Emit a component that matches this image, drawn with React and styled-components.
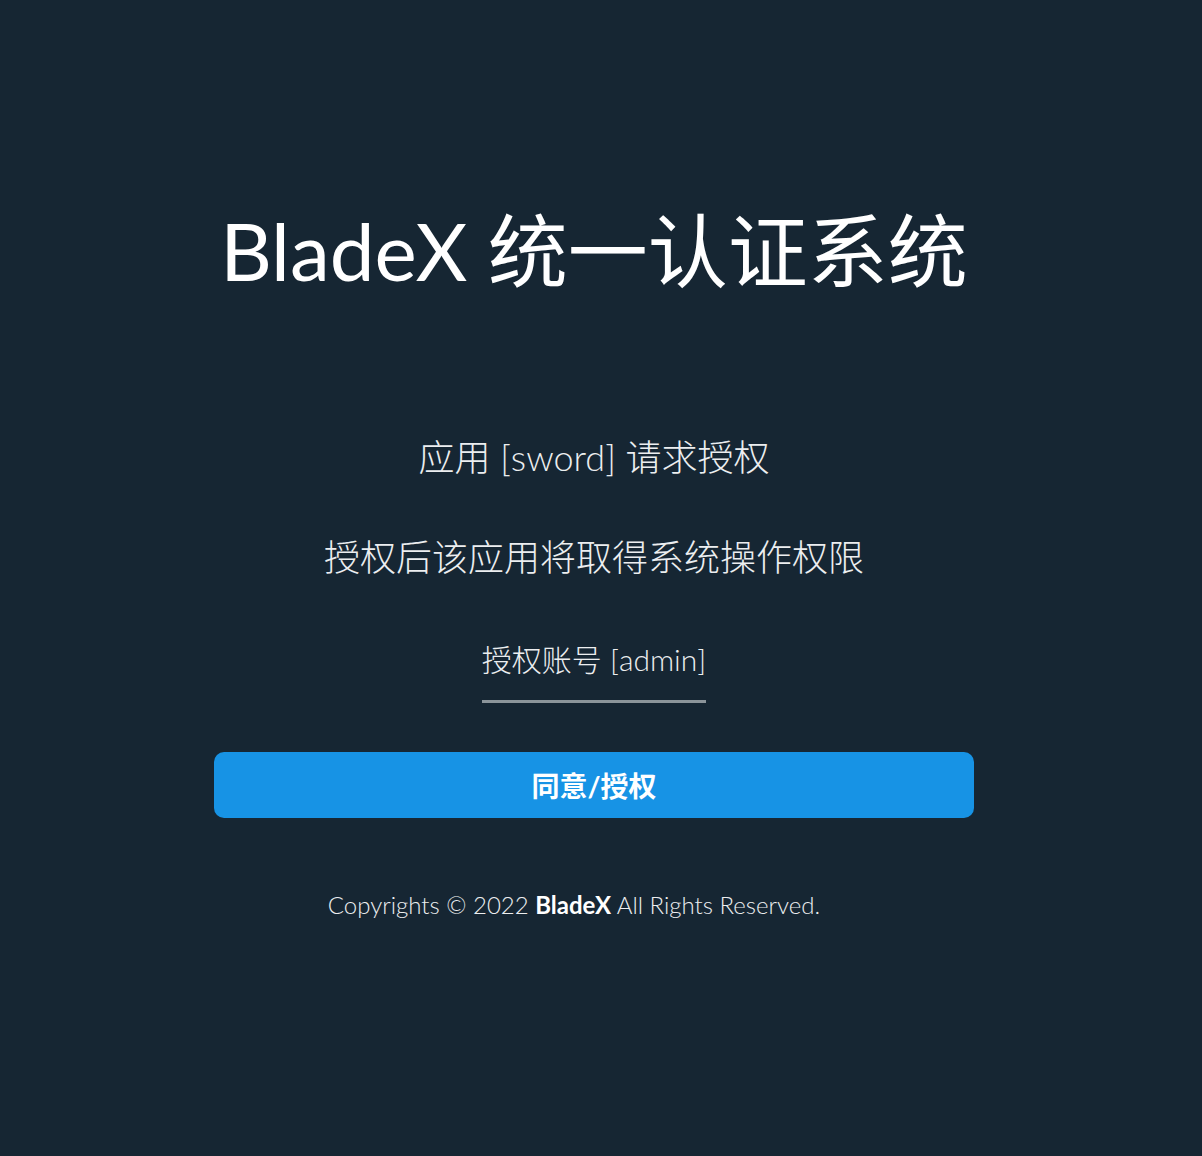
import React from "react";
import styled, { createGlobalStyle } from "styled-components";

const GlobalStyle = createGlobalStyle`
  html, body {
    margin: 0;
    padding: 0;
    background: #162633;
  }
  body {
    font-family: Lato, "Noto Sans CJK SC", sans-serif;
    color: #e6e9ec;
  }
`;

const Page = styled.div`
  min-height: 1156px;
  padding: 196px 14px 0 0;
  box-sizing: border-box;
  display: flex;
  flex-direction: column;
  align-items: center;
`;

const Title = styled.h1`
  margin: 0;
  font-size: 80px;
  font-weight: 400;
  line-height: 108px;
  color: #ffffff;
`;

const Info = styled.p`
  margin: ${(p) => p.$top}px 0 0;
  font-size: 36px;
  font-weight: 300;
  line-height: 50px;
  color: #eceef0;
  font-family: Lato, "Noto Sans CJK SC Light", "Noto Sans CJK SC", sans-serif;
`;

const Account = styled.div`
  margin-top: 56px;
  font-size: 30px;
  font-weight: 300;
  line-height: 42px;
  color: #eceef0;
  font-family: Lato, "Noto Sans CJK SC Light", "Noto Sans CJK SC", sans-serif;
  padding-bottom: 20px;
  border-bottom: 3px solid #8b949a;
`;

const Button = styled.button`
  margin-top: 49px;
  width: 760px;
  height: 66px;
  border: none;
  border-radius: 10px;
  background: #1793e5;
  color: #ffffff;
  font-family: Lato, "Noto Sans CJK SC", sans-serif;
  font-size: 28px;
  font-weight: 700;
  cursor: pointer;
`;

const Footer = styled.p`
  margin: 70px 0 0;
  padding-right: 40px;
  font-size: 24px;
  font-weight: 300;
  line-height: 34px;
  color: #eceef0;

  strong {
    font-weight: 700;
    color: #ffffff;
  }
`;

export default function App() {
  return (
    <>
      <GlobalStyle />
      <Page>
        <Title>BladeX 统一认证系统</Title>
        <Info $top={128}>应用 [sword] 请求授权</Info>
        <Info $top={50}>授权后该应用将取得系统操作权限</Info>
        <Account>授权账号 [admin]</Account>
        <Button>同意/授权</Button>
        <Footer>
          Copyrights © 2022 <strong>BladeX</strong> All Rights Reserved.
        </Footer>
      </Page>
    </>
  );
}
